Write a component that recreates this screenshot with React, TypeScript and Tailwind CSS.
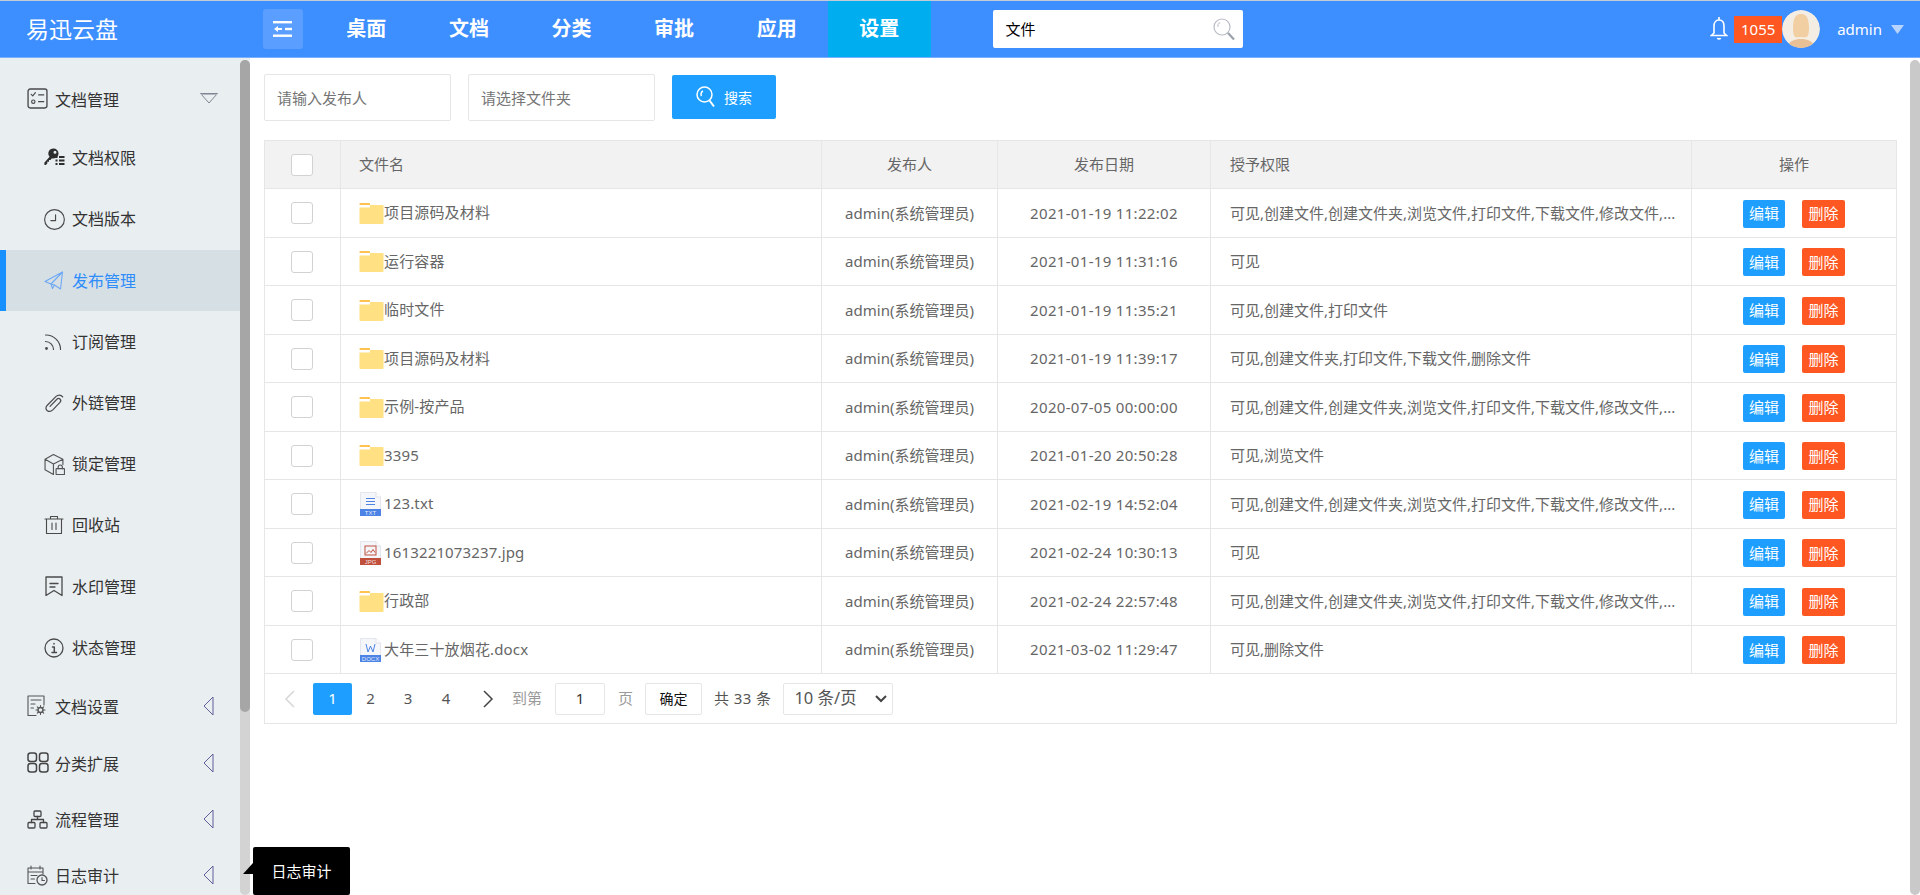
import React from "react";

const FONT = "font-['Noto_Sans','Noto_Sans_CJK_SC',sans-serif]";

const S = ({ children, c = "#4a4a4a", w = 20, h = 20, vb = "0 0 20 20", sw = 1.1 }: any) => (
  <svg width={w} height={h} viewBox={vb} fill="none" stroke={c} strokeWidth={sw} strokeLinecap="round" strokeLinejoin="round" className="shrink-0">
    {children}
  </svg>
);

const icons: Record<string, React.ReactNode> = {
  doc: (
    <S w={21} h={21}>
      <rect x="1" y="1" width="18" height="18" rx="2" strokeWidth="1.3" />
      <path d="M4 6l1.5 1.5L8 4.5M11 6.5h5M11 13h5" />
      <circle cx="6" cy="13" r="1.6" />
    </S>
  ),
  key: (
    <svg width="21" height="20" viewBox="0 0 21 20" className="shrink-0">
      <path d="M9.5 0.5a5 5 0 0 1 5 5 5 5 0 0 1-5 5c-.6 0-1.100-.1-1.600-.3L6.500 12H5v1.800H3.300v1.700L1.800 17H0.500l-.2-2.200 5.300-6a5 5 0 0 1 3.900-8.300zm1.500 2.300a1.500 1.500 0 1 0 0 3 1.500 1.500 0 0 0 0-3z" fill="#2d2d2d" />
      <path d="M11.500 9h9M11.500 12.500h9M11.500 16h9" stroke="#2d2d2d" strokeWidth="2" strokeDasharray="2 1.500 6" />
    </svg>
  ),
  clock: (
    <S w={21} h={21}>
      <circle cx="10" cy="10" r="9.400" />
      <path d="M11 5.500V11H6.500" />
    </S>
  ),
  send: (
    <S c="#6ea8f5" w={20} h={20}>
      <path d="M18.500 1L1 10.500l6 2.500L18.500 1zM18.500 1L16.500 18 10.500 14 7 13l1.500 4.500 2-3.500" />
    </S>
  ),
  rss: (
    <S w={18} h={18} vb="0 0 18 18" sw={1.2}>
      <circle cx="2.500" cy="15.500" r="0.800" fill="#4a4a4a" />
      <path d="M1.500 8.500a8 8 0 0 1 8 8M1.500 2a14.500 14.500 0 0 1 15 14.500" />
    </S>
  ),
  clip: (
    <S w={22} h={22} vb="0 0 20 20">
      <path d="M17 4.500c-1.800-2.500-4.500-2-6-.5L3 12c-1.800 2-1.500 4 0 5s3.500.8 5-.7l6.500-6.800c1-1.200.8-2.500 0-3.200s-2-.6-3 .5L5.500 13" />
    </S>
  ),
  box: (
    <S w={21} h={21} c="#555">
      <path d="M1 5l8-4.500L18 5v5M1 5v10l8 4.500M1 5l8 4.500V19.500M9 9.500L18 5" />
      <rect x="11.500" y="14" width="8" height="5.500" rx="0.500" />
      <path d="M13.500 14v-1.500a2 2 0 0 1 4 0V14" />
    </S>
  ),
  trash: (
    <S w={20} h={20} c="#4a4a4a">
      <path d="M1 4h18M6.500 4V1.500h7V4M2.500 4v14.500h15V4M8 8v6.500M12 8v6.500" />
    </S>
  ),
  mark: (
    <S w={20} h={21} vb="0 0 20 21" sw={1.3}>
      <path d="M2 1h16v18.500l-8-5-8 5V1zM6 7.500h8M6 11h5" />
    </S>
  ),
  info: (
    <S w={20} h={20}>
      <circle cx="10" cy="10" r="9" strokeWidth="1.300" />
      <path d="M8.500 9h1.800v5.500M8 14.500h4.500M10 5.500v.5" strokeWidth="1.500" />
    </S>
  ),
  set: (
    <S w={20} h={22} vb="0 0 20 22" c="#555">
      <path d="M9 20.500H1V1h16v9" />
      <path d="M4 5h10M4 9h4M4 13h2.500" />
      <circle cx="13.500" cy="15" r="2.500" strokeWidth="1.400" />
      <path d="M13.500 10.500V12M13.500 18v1.500M9 15h1.500M16.500 15H18M10.300 11.800l1 1M15.700 17.200l1 1M16.700 11.800l-1 1M11.300 17.200l-1 1" />
    </S>
  ),
  grid: (
    <S w={22} h={21} vb="0 0 22 21" sw={1.500} c="#444">
      <rect x="1" y="1" width="8.500" height="8.500" rx="2.500" />
      <rect x="12.500" y="1" width="8.500" height="8.500" rx="2.500" />
      <rect x="1" y="11.500" width="8.500" height="8.500" rx="2.500" />
      <rect x="12.500" y="11.500" width="8.500" height="8.500" rx="2.500" />
    </S>
  ),
  flow: (
    <S w={21} h={19} vb="0 0 21 19" sw={1.300} c="#444">
      <rect x="7" y="1" width="7" height="5.500" rx="1" />
      <rect x="1" y="12.500" width="7" height="5.500" rx="1" />
      <rect x="13" y="12.500" width="7" height="5.500" rx="1" />
      <path d="M10.500 6.500V9.500M4.500 12.500V9.500H16.500V12.500" />
    </S>
  ),
  log: (
    <S w={21} h={21} vb="0 0 21 21" c="#555">
      <path d="M8 18.500H1V3h15v6M1 7h15M4 1v3M13 1v3M4 10.500h6M4 14h3.500" />
      <circle cx="15" cy="15" r="5" strokeWidth="1.300" />
      <path d="M15 12.500V15.500H17.500" />
    </S>
  ),
};

const Left = () => (
  <svg width="11" height="20" viewBox="0 0 11 20" fill="none" stroke="#5f5f9a" strokeWidth="1" className="shrink-0">
    <path d="M10 1L1 10l9 9V1z" />
  </svg>
);
const Down = () => (
  <svg width="18" height="11" viewBox="0 0 18 11" className="shrink-0">
    <path d="M0.500 0.500h17L9 10z" fill="none" stroke="#7d8590" />
    <path d="M1 1h16v1H1z" fill="#b4b8c0" />
  </svg>
);

const Folder = () => (
  <svg width="25" height="21" viewBox="0 0 24 21" className="shrink-0">
    <path d="M0 1a1 1 0 0 1 1-1h8.500a1 1 0 0 1 1 1v1H0z" fill="#ffc14f" />
    <path d="M0 4.500h10.500V2H23a1 1 0 0 1 1 1v17a1 1 0 0 1-1 1H1a1 1 0 0 1-1-1z" fill="#ffe082" />
  </svg>
);

const FileIcon = ({ label, color, kind }: { label: string; color: string; kind: string }) => (
  <svg width="21" height="24" viewBox="0 0 21 24" className="shrink-0 ml-[1px]">
    <path d="M0.500 0.500H16L20.500 5V23.500H0.500z" fill="#f4f6fa" stroke="#e3e6ec" />
    <path d="M16 0.500V5h4.500" fill="#fff" stroke="#dfe2e8" />
    <rect x="0" y="17" width="21" height="7" fill={color} />
    <text x="10.500" y="22.600" fontSize="6" fontFamily="Liberation Sans" fill="#fff" fillOpacity="0.85" textAnchor="middle">{label}</text>
    {kind === "txt" && <path d="M6 6.500h9M6 9.500h9M6 12.500h9" stroke={color} strokeWidth="1" />}
    {kind === "jpg" && <g fill="none" stroke={color} strokeWidth="1"><rect x="5" y="5" width="11" height="9" /><path d="M6 12.500l3-3 2 2 2-3 2 3" /></g>}
    {kind === "doc" && <path d="M6 6l2 8 2.500-6 2.500 6 2-8" fill="none" stroke={color} strokeWidth="1" />}
  </svg>
);

const MagnifierBtn = () => (
  <svg width="20" height="22" viewBox="0 0 20 22" fill="none" stroke="#fff" strokeWidth="1.500" className="shrink-0">
    <circle cx="8.500" cy="8.500" r="7.500" />
    <path d="M7 5a3.500 3.500 0 0 0-1.500 5" />
    <path d="M13.500 14.500l4.500 6" strokeWidth="2" />
  </svg>
);

const Magnifier = () => (
  <svg width="22" height="22" viewBox="0 0 22 22" fill="none" strokeWidth="1.200" className="shrink-0">
    <circle cx="9" cy="9" r="8" stroke="#b7bcc4" />
    <path d="M7 4.500a4 4 0 0 0-2 4.500" stroke="#c9cdd4" />
    <path d="M15 15l6 6.500" stroke="#9aa1ab" strokeWidth="2.200" />
  </svg>
);

const Bell = () => (
  <svg width="18" height="25" viewBox="0 0 18 25" fill="none" stroke="#fff" strokeWidth="1.600" className="shrink-0 mb-[2px]">
    <path d="M9 4c-3.500 0-5 3-5 6v7l-2.500 2.500h15L14 17v-7c0-3-1.500-6-5-6zM9 1v3" />
    <path d="M7.500 22a1.600 1.600 0 0 0 3 0" fill="#fff" />
  </svg>
);

const Avatar = () => (
  <svg width="38" height="38" viewBox="0 0 38 38" className="shrink-0 rounded-full">
    <circle cx="19" cy="19" r="19" fill="#f4ede3" />
    <path d="M11 18c0-12 4-14 8-14s8 2 8 14-4 9-8 9-8 3-8-9z" fill="#f2cfa2" />
    <path d="M5 38c1-7 8-9 14-9s13 2 14 9z" fill="#e7c096" />
  </svg>
);

const subs = [
  ["key", "文档权限"],
  ["clock", "文档版本"],
  ["send", "发布管理"],
  ["rss", "订阅管理"],
  ["clip", "外链管理"],
  ["box", "锁定管理"],
  ["trash", "回收站"],
  ["mark", "水印管理"],
  ["info", "状态管理"],
];

const groups = [
  ["set", "文档设置"],
  ["grid", "分类扩展"],
  ["flow", "流程管理"],
  ["log", "日志审计"],
];

const full = "可见,创建文件,创建文件夹,浏览文件,打印文件,下载文件,修改文件,...";

const rows: [string, string, string, string][] = [
  ["folder", "项目源码及材料", "2021-01-19 11:22:02", full],
  ["folder", "运行容器", "2021-01-19 11:31:16", "可见"],
  ["folder", "临时文件", "2021-01-19 11:35:21", "可见,创建文件,打印文件"],
  ["folder", "项目源码及材料", "2021-01-19 11:39:17", "可见,创建文件夹,打印文件,下载文件,删除文件"],
  ["folder", "示例-按产品", "2020-07-05 00:00:00", full],
  ["folder", "3395", "2021-01-20 20:50:28", "可见,浏览文件"],
  ["txt", "123.txt", "2021-02-19 14:52:04", full],
  ["jpg", "1613221073237.jpg", "2021-02-24 10:30:13", "可见"],
  ["folder", "行政部", "2021-02-24 22:57:48", full],
  ["doc", "大年三十放烟花.docx", "2021-03-02 11:29:47", "可见,删除文件"],
];

const Check = () => <span className="block mx-auto w-[22px] h-[22px] bg-white border border-[#d2d2d2] rounded-[3px]" />;

const base = "border-b border-r border-[#e6e6e6] text-[15px] text-[#666] font-normal whitespace-nowrap overflow-hidden";
const td = `${base} px-[18px]`;
const tdCheck = `${base} pr-[2px]`;
const tdPerm = `${base} pl-[19px] pr-[10px]`;

export default function App() {
  return (
    <div className={`${FONT} w-[1920px] h-[895px] overflow-hidden flex flex-col bg-white`}>
      <header className="h-[58px] shrink-0 bg-[#3d8eff] border-t border-t-[#c3ccd6] border-b border-b-[#79b0ff] flex items-center text-white">
        <div className="w-[263px] pl-[26px] text-[23px] leading-none shrink-0">易迅云盘</div>
        <div className="w-[40px] h-[40px] bg-[#5a9fff] rounded-[3px] flex items-center justify-center shrink-0">
          <svg width="20" height="16" viewBox="0 0 20 16" fill="#fff">
            <rect x="0" y="0" width="19" height="2.400" />
            <rect x="0" y="13.500" width="19" height="2.400" />
            <rect x="12" y="6.800" width="7" height="2.400" />
            <path d="M1 8l4-3v6z M5 7h4v2H5z" />
          </svg>
        </div>
        <nav className="flex self-stretch ml-[12px] shrink-0">
          {["桌面", "文档", "分类", "审批", "应用", "设置"].map((t, i) => (
            <div key={t} className={`w-[102.600px] flex items-center justify-center text-[20px] font-bold ${i === 5 ? "bg-[#00aeef]" : ""}`}>
              {t}
            </div>
          ))}
        </nav>
        <div className="ml-[62px] w-[250px] h-[38px] bg-white rounded-[2px] flex items-center justify-between pl-[13px] pr-[8px] text-[15px] text-black shrink-0">
          <span>文件</span>
          <Magnifier />
        </div>
        <div className="ml-auto flex items-center pr-[16px]">
          <Bell />
          <span className="ml-[6px] w-[48px] h-[27px] bg-[#ff5722] flex items-center justify-center text-[15px]">1055</span>
          <Avatar />
          <span className="ml-[17px] text-[15px]">admin</span>
          <svg width="13" height="9" viewBox="0 0 13 9" className="ml-[9px]" fill="#b7d3ff">
            <path d="M0 0h13L6.500 9z" />
          </svg>
        </div>
      </header>

      <div className="flex flex-1 min-h-0">
        <aside className="w-[240px] shrink-0 bg-[#e9eef1] pt-[12px] overflow-hidden text-[16px] text-[#333]">
          <div className="h-[57.600px] flex items-center pl-[27px] pr-[22px]">
            <span className="w-[28px] shrink-0 flex items-center">{icons.doc}</span>
            <span className="flex-1 pt-[2px]">文档管理</span>
            <Down />
          </div>
          {subs.map(([ic, t]) =>
            t === "发布管理" ? (
              <div key={t} className="h-[61.200px] flex items-center pl-[38px] bg-[#d5dfe4] text-[#2e8dfb] border-l-[6px] border-[#1890ff]">
                <span className="w-[28px] shrink-0 flex items-center">{icons[ic]}</span>
                <span>{t}</span>
              </div>
            ) : (
              <div key={t} className="h-[61.200px] flex items-center pl-[44px]">
                <span className="w-[28px] shrink-0 flex items-center">{icons[ic]}</span>
                <span>{t}</span>
              </div>
            )
          )}
          {groups.map(([ic, t]) => (
            <div key={t} className="h-[56.300px] flex items-center pl-[27px] pr-[26px]">
              <span className="w-[28px] shrink-0 flex items-center">{icons[ic]}</span>
              <span className="flex-1 pt-[2px]">{t}</span>
              <Left />
            </div>
          ))}
        </aside>

        <div className="w-[10px] shrink-0 bg-[#e9eef1] pt-[2px] flex flex-col">
          <div className="flex-1 bg-[#d3d3d3] rounded-[5px] flex flex-col">
            <div className="h-[652px] bg-[#a6a6a6] rounded-[5px]" />
          </div>
        </div>

        <main className="flex-1 min-w-0 relative pl-[14px] pr-[13px] pt-[16px]">
          <div className="flex items-start h-[47px]">
            <input readOnly placeholder="请输入发布人" className="w-[187px] h-[47px] border border-[#e6e6e6] rounded-[2px] px-[12px] text-[15px] placeholder:text-[#757575] outline-none" />
            <input readOnly placeholder="请选择文件夹" className="ml-[17px] w-[187px] h-[47px] border border-[#e6e6e6] rounded-[2px] px-[12px] text-[15px] placeholder:text-[#757575] outline-none" />
            <button className="ml-[17px] mt-[1px] w-[104px] h-[44px] bg-[#1e9fff] rounded-[2px] text-white text-[14px] flex items-center justify-center gap-[8px]">
              <MagnifierBtn />
              <span>搜索</span>
            </button>
          </div>

          <table className="mt-[19px] w-[1633px] table-fixed border-separate border-spacing-0 border-l border-[#e6e6e6]">
            <colgroup>
              <col className="w-[76px]" />
              <col className="w-[481px]" />
              <col className="w-[176px]" />
              <col className="w-[213px]" />
              <col className="w-[481px]" />
              <col className="w-[205px]" />
            </colgroup>
            <thead>
              <tr className="h-[49px] bg-[#f2f2f2]">
                <th className={`${tdCheck} border-t`}><Check /></th>
                <th className={`${td} border-t text-left`}>文件名</th>
                <th className={`${td} border-t text-center`}>发布人</th>
                <th className={`${td} border-t text-center`}>发布日期</th>
                <th className={`${tdPerm} border-t text-left`}>授予权限</th>
                <th className={`${td} border-t text-center`}>操作</th>
              </tr>
            </thead>
            <tbody>
              {rows.map(([kind, name, date, perm], i) => (
                <tr key={i} className={i % 2 === 0 ? "h-[49px]" : "h-[48px]"}>
                  <td className={tdCheck}><Check /></td>
                  <td className={`${td} text-[#444]`}>
                    <div className="flex items-center">
                      {kind === "folder" ? <Folder /> : <FileIcon kind={kind} label={kind === "txt" ? "TXT" : kind === "jpg" ? "JPG" : "DOCX"} color={kind === "txt" ? "#4c83e4" : kind === "jpg" ? "#c0503c" : "#4c83e4"} />}
                      <span className={`mb-[1px] tracking-[0.15px] ${kind === "folder" ? "" : "ml-[3px]"}`}>{name}</span>
                    </div>
                  </td>
                  <td className={`${td} text-center`}>admin(系统管理员)</td>
                  <td className={`${td} text-center tracking-[0.32px]`}>{date}</td>
                  <td className={tdPerm}>{perm}</td>
                  <td className={`${td} text-center`}>
                    <div className="flex justify-center gap-[17px] pt-[1px]">
                      <button className="w-[42px] h-[28px] bg-[#1e9fff] text-white text-[15px] rounded-[2px] leading-none">编辑</button>
                      <button className="w-[43px] h-[28px] bg-[#ff5722] text-white text-[15px] rounded-[2px] leading-none">删除</button>
                    </div>
                  </td>
                </tr>
              ))}
            </tbody>
          </table>

          <div className="w-[1633px] h-[50px] border-l border-r border-b border-[#e6e6e6] flex items-center text-[15px] text-[#555]">
            <svg width="12" height="18" viewBox="0 0 12 18" fill="none" stroke="#d6d6d6" strokeWidth="1.500" className="ml-[19px]">
              <path d="M10 1L2 9l8 8" />
            </svg>
            <span className="ml-[17px] w-[39px] h-[32px] bg-[#1e9fff] rounded-[2px] text-white flex items-center justify-center">1</span>
            <span className="w-[37px] text-center">2</span>
            <span className="w-[38px] text-center">3</span>
            <span className="w-[38px] text-center">4</span>
            <svg width="12" height="18" viewBox="0 0 12 18" fill="none" stroke="#444" strokeWidth="1.500" className="ml-[17px]">
              <path d="M2 1l8 8-8 8" />
            </svg>
            <span className="ml-[18px] text-[#999]">到第</span>
            <span className="ml-[13px] w-[50px] h-[32px] border border-[#e6e6e6] rounded-[2px] flex items-center justify-center text-[#333]">1</span>
            <span className="ml-[13px] text-[#999]">页</span>
            <span className="ml-[12px] w-[57px] h-[32px] border border-[#e6e6e6] rounded-[2px] flex items-center justify-center text-[#111] text-[14px]">确定</span>
            <span className="ml-[12px] tracking-[0.4px]">共 33 条</span>
            <div className="relative ml-[12px]">
              <select className="block appearance-none w-[110px] h-[32px] border border-[#e6e6e6] rounded-[2px] pl-[10px] text-[16.500px] text-[#555] bg-white outline-none">
                <option>10 条/页</option>
              </select>
              <svg width="12" height="8" viewBox="0 0 12 8" fill="none" stroke="#444" strokeWidth="2" className="absolute right-[6px] top-[12px] pointer-events-none">
                <path d="M1 1l5 5 5-5" />
              </svg>
            </div>
          </div>

          <div className="absolute left-[3px] top-[789px] w-[97px] h-[48px] bg-black rounded-[2px] text-white text-[15px] flex items-center justify-center">
            日志审计
            <span className="absolute left-[-10px] top-[16px] w-0 h-0 border-y-[0px] border-b-[11px] border-l-[10px] border-b-black border-l-transparent" />
          </div>
        </main>

        <div className="w-[10px] shrink-0 pt-[2px]">
          <div className="h-full bg-[#c9c9c9] rounded-[5px]" />
        </div>
      </div>
    </div>
  );
}
